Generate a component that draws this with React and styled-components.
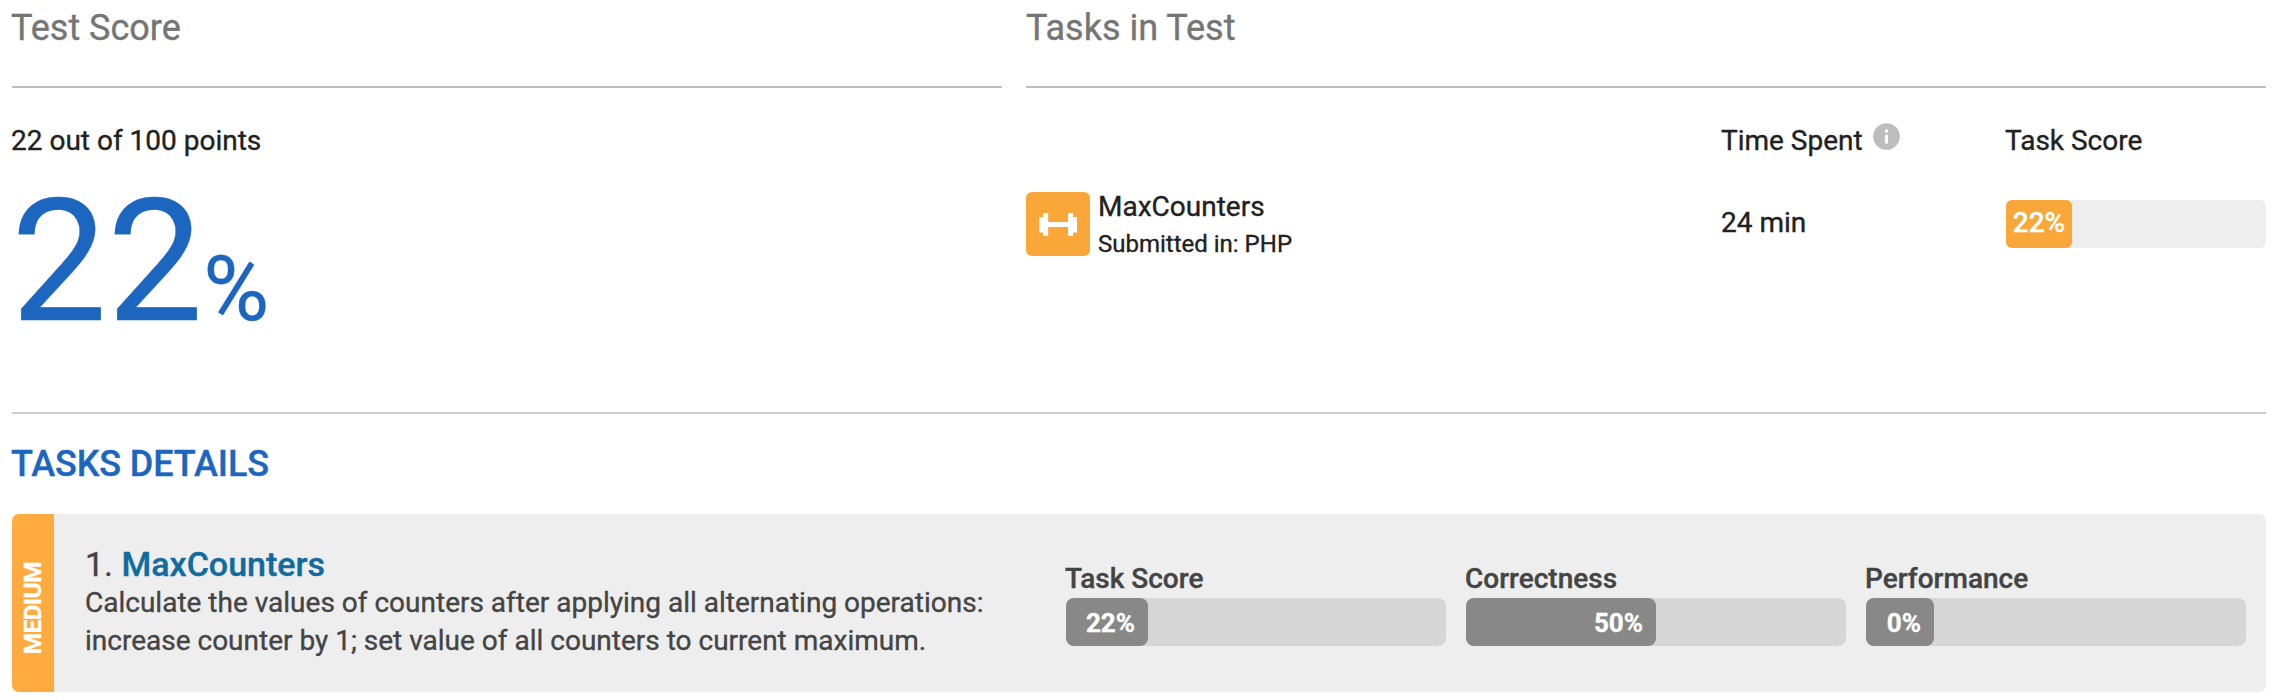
import React from "react";
import styled, { createGlobalStyle } from "styled-components";

const GlobalStyle = createGlobalStyle`
  * { box-sizing: border-box; }
  body {
    margin: 0;
    background: #fff;
    color: #212121;
    font-family: Roboto, "Liberation Sans", sans-serif;
    font-size: 28px;
    line-height: 38px;
    -webkit-text-stroke: 0.35px currentColor;
  }
  h2, h3, p { margin: 0; }
`;

const Page = styled.main`
  width: 2276px;
  height: 700px;
  padding: 0 10px 0 12px;
  overflow: hidden;
`;

const Summary = styled.section`
  display: grid;
  grid-template-columns: 990px 1240px;
  column-gap: 24px;
  height: 412px;
`;

const PanelTitle = styled.h2`
  height: 88px;
  padding-top: 7px;
  border-bottom: 2px solid #bdbdbd;
  color: #757575;
  font-size: 36px;
  font-weight: 400;
  line-height: 42px;
  text-indent: ${(p) => p.$indent || 0}px;
`;

const Points = styled.p`
  margin-top: 34px;
  text-indent: -1px;
`;

const BigScore = styled.p`
  margin-top: 2px;
  color: #1c66bf;
  font-size: 171px;
  line-height: 200px;
  text-indent: -1px;
`;

const BigScoreUnit = styled.span`
  font-size: 90px;
`;

const TaskGrid = styled.div`
  display: grid;
  grid-template-columns: 695px 285px 260px;
  grid-template-rows: 38px 64px;
  row-gap: 32px;
  padding-top: 34px;
`;

const HeadCell = styled.div`
  display: flex;
  gap: 10px;
  text-indent: ${(p) => p.$indent || 0}px;
`;

const InfoMark = styled.svg`
  width: 27px;
  height: 27px;
  margin-top: 0.5px;
`;

const TaskCell = styled.div`
  display: flex;
  gap: 8px;
`;

const TaskBadge = styled.svg`
  flex: none;
  width: 64px;
  height: 64px;
  border-radius: 6px;
  background: #f8a738;
`;

const TaskName = styled.p`
  margin-top: -4px;
`;

const TaskLanguage = styled.p`
  font-size: 24px;
  line-height: 36px;
`;

const TimeCell = styled.div`
  padding-top: 12px;
`;

const ScoreTrack = styled.div`
  height: 48px;
  margin-top: 8px;
  border-radius: 6px;
  background: #eeeeee;
`;

const ScoreFill = styled.div`
  width: 66px;
  height: 48px;
  border-radius: 6px;
  background: #f8a738;
  color: #fff;
  font-weight: 500;
  line-height: 45px;
  text-align: center;
`;

const Details = styled.section`
  border-top: 2px solid #cccccc;
`;

const DetailsTitle = styled.h2`
  height: 100px;
  padding-top: 29px;
  color: #1c66bf;
  font-size: 36px;
  font-weight: 500;
  letter-spacing: -0.1px;
  line-height: 42px;
  text-indent: -1px;
`;

const TaskCard = styled.article`
  display: flex;
  height: 178px;
  border-radius: 7px;
  background: #eeeeee;
  color: #444;
  overflow: hidden;
`;

const Difficulty = styled.div`
  display: flex;
  flex: none;
  align-items: center;
  justify-content: center;
  width: 42px;
  padding-top: 10px;
  background: #ffab40;
  color: #fff;
  font-size: 24.5px;
  font-weight: 700;
  letter-spacing: -0.6px;
`;

const DifficultyLabel = styled.span`
  writing-mode: vertical-rl;
  transform: rotate(180deg);
`;

const Description = styled.div`
  flex: none;
  width: 1012px;
  padding: 30px 0 0 31px;
`;

const DescriptionTitle = styled.h3`
  font-size: 34px;
  font-weight: 400;
  line-height: 40px;
`;

const TaskLink = styled.span`
  color: #116b9f;
  font-weight: 500;
`;

const DescriptionText = styled.p`
  white-space: pre-line;
`;

const Metrics = styled.div`
  display: flex;
  gap: 20px;
  padding-top: 46px;
`;

const Metric = styled.div`
  width: 380px;
`;

const MetricLabel = styled.p`
  font-weight: 500;
  text-indent: -1px;
`;

const MetricTrack = styled.div`
  height: 48px;
  border-radius: 8px;
  background: #d6d6d6;
`;

const MetricFill = styled.div`
  height: 48px;
  padding-right: 13px;
  border-radius: 8px;
  background: #888888;
  color: #fff;
  font-size: 26px;
  font-weight: 700;
  line-height: 50px;
  text-align: right;
`;

const metrics = [
  { label: "Task Score", value: 22, width: 82 },
  { label: "Correctness", value: 50, width: 190 },
  { label: "Performance", value: 0, width: 68 },
];

export default function App() {
  return (
    <Page>
      <GlobalStyle />
      <Summary>
        <div>
          <PanelTitle $indent={-1}>Test Score</PanelTitle>
          <Points>22 out of 100 points</Points>
          <BigScore>22<BigScoreUnit>%</BigScoreUnit></BigScore>
        </div>
        <div>
          <PanelTitle>Tasks in Test</PanelTitle>
          <TaskGrid>
            <div />
            <HeadCell>
              Time Spent
              <InfoMark viewBox="0 0 27 27">
                <circle cx="13.5" cy="13.5" r="13.3" fill="#bdbdbd" />
                <path d="M12 6.500h3v3h-3zM12 12h3v8.500h-3z" fill="#fff" />
              </InfoMark>
            </HeadCell>
            <HeadCell $indent={-1}>Task Score</HeadCell>
            <TaskCell>
              <TaskBadge viewBox="0 0 64 64">
                <path d="M13.300 25h3.900v-4h5v9h19.800v-9h5v4h4v15.500h-4v3.500h-5v-9h-19.800v9h-5v-3.500h-3.900z" fill="#fff" />
              </TaskBadge>
              <div>
                <TaskName>MaxCounters</TaskName>
                <TaskLanguage>Submitted in: PHP</TaskLanguage>
              </div>
            </TaskCell>
            <TimeCell>24 min</TimeCell>
            <ScoreTrack>
              <ScoreFill>22%</ScoreFill>
            </ScoreTrack>
          </TaskGrid>
        </div>
      </Summary>
      <Details>
        <DetailsTitle>TASKS DETAILS</DetailsTitle>
        <TaskCard>
          <Difficulty>
            <DifficultyLabel>MEDIUM</DifficultyLabel>
          </Difficulty>
          <Description>
            <DescriptionTitle>1. <TaskLink>MaxCounters</TaskLink></DescriptionTitle>
            <DescriptionText>
              {"Calculate the values of counters after applying all alternating operations:\nincrease counter by 1; set value of all counters to current maximum."}
            </DescriptionText>
          </Description>
          <Metrics>
            {metrics.map((m) => (
              <Metric key={m.label}>
                <MetricLabel>{m.label}</MetricLabel>
                <MetricTrack>
                  <MetricFill style={{ width: m.width }}>{m.value}%</MetricFill>
                </MetricTrack>
              </Metric>
            ))}
          </Metrics>
        </TaskCard>
      </Details>
    </Page>
  );
}
